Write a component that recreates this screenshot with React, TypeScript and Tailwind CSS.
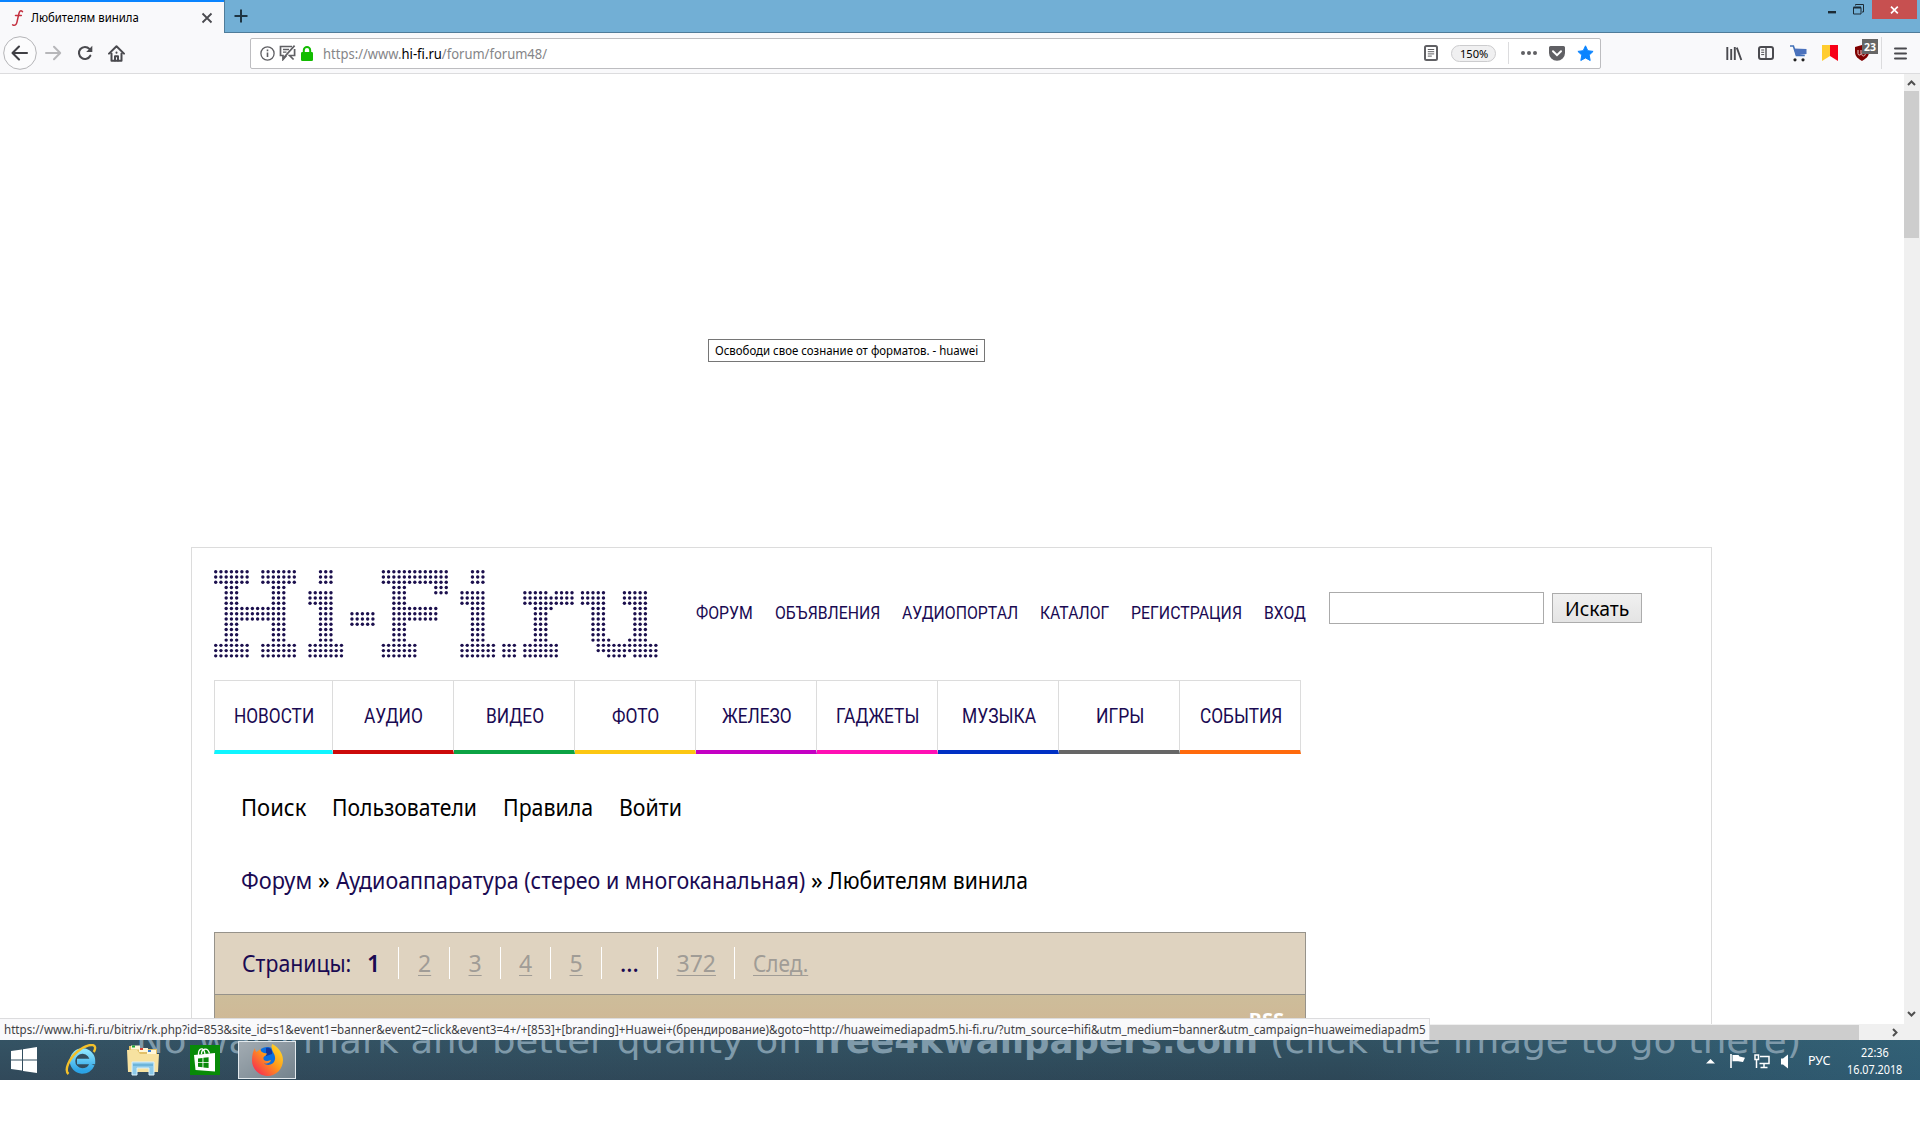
import { useLayoutEffect, useRef, useState } from "react";
import type { ReactNode } from "react";

type FitProps = {
  w: number;
  children: ReactNode;
  className?: string;
};

// Squeezes a line of text horizontally so that it fills exactly `w` pixels.
function Fit({ w, children, className = "" }: FitProps) {
  const ref = useRef<HTMLSpanElement>(null);
  const [scale, setScale] = useState(1);

  useLayoutEffect(() => {
    if (ref.current) setScale(w / ref.current.offsetWidth);
  }, [w]);

  return (
    <span className={`block shrink-0 ${className}`} style={{ width: w }}>
      <span
        ref={ref}
        className="inline-block origin-left whitespace-pre"
        style={{ transform: `scaleX(${scale})` }}
      >
        {children}
      </span>
    </span>
  );
}

// [first column, last column, first row, last row]
const LOGO_BLOCKS = [
  // H
  [0, 6, 0, 2], [9, 15, 0, 2], [2, 4, 3, 13], [11, 13, 3, 13], [5, 10, 7, 9], [0, 6, 14, 16], [9, 15, 14, 16],
  // i
  [20, 22, 0, 2], [18, 22, 4, 6], [20, 22, 7, 13], [18, 24, 14, 16],
  // -
  [26, 30, 8, 10],
  // F
  [32, 44, 0, 2], [42, 44, 3, 4], [34, 36, 3, 13], [37, 42, 7, 9], [32, 38, 14, 16],
  // i
  [49, 51, 0, 2], [47, 51, 4, 6], [49, 51, 7, 13], [47, 53, 14, 16],
  // .
  [55, 57, 14, 16],
  // r
  [59, 63, 4, 4], [65, 68, 4, 4], [59, 68, 5, 6], [61, 64, 7, 7], [61, 63, 8, 13], [59, 65, 14, 16],
  // u
  [70, 74, 4, 6], [78, 82, 4, 6], [72, 74, 7, 12], [80, 82, 7, 12], [72, 75, 13, 13], [79, 82, 13, 13],
  [73, 84, 14, 15], [75, 78, 16, 16], [80, 84, 16, 16],
];

function Logo() {
  const dots: ReactNode[] = [];
  for (const [c0, c1, r0, r1] of LOGO_BLOCKS) {
    for (let c = c0; c <= c1; c++) {
      for (let r = r0; r <= r1; r++) {
        dots.push(<circle key={`${c}-${r}`} cx={1.7 + c * 5.24} cy={1.7 + r * 5.26} r="1.7" />);
      }
    }
  }
  return (
    <svg width="446" height="90" fill="#1b0f4d" className="mt-[22px] shrink-0">
      {dots}
    </svg>
  );
}

const TOP_LINKS = [
  { label: "ФОРУМ", w: 57 },
  { label: "ОБЪЯВЛЕНИЯ", w: 105 },
  { label: "АУДИОПОРТАЛ", w: 116 },
  { label: "КАТАЛОГ", w: 69 },
  { label: "РЕГИСТРАЦИЯ", w: 111 },
  { label: "ВХОД", w: 42 },
];

const SECTIONS = [
  { label: "НОВОСТИ", w: 80, cell: "w-[119px] border-l border-b-[#0ff5ff]" },
  { label: "АУДИО", w: 59, cell: "w-[121px] border-b-[#cc0a0a]" },
  { label: "ВИДЕО", w: 58, cell: "w-[121px] border-b-[#0ca344]" },
  { label: "ФОТО", w: 47, cell: "w-[121px] border-b-[#fcc712]" },
  { label: "ЖЕЛЕЗО", w: 70, cell: "w-[121px] border-b-[#c400c4]" },
  { label: "ГАДЖЕТЫ", w: 83, cell: "w-[121px] border-b-[#ff0fb4]" },
  { label: "МУЗЫКА", w: 74, cell: "w-[121px] border-b-[#0030c4]" },
  { label: "ИГРЫ", w: 48, cell: "w-[121px] border-b-[#666]" },
  { label: "СОБЫТИЯ", w: 82, cell: "w-[121px] border-b-[#ff6a0d]" },
];

const PAGES = [
  { label: "2", w: 13 },
  { label: "3", w: 13 },
  { label: "4", w: 13 },
  { label: "5", w: 13 },
  { label: "...", w: 19 },
  { label: "372", w: 39 },
  { label: "След.", w: 55 },
];

function TabStrip() {
  return (
    <div className="flex h-[33px] items-start bg-[#72afd5]">
      <div className="flex h-[33px] w-[224px] items-center border-t-2 border-[#0a84ff] bg-[#f9f9fb] pl-[11px]">
        <svg width="14" height="18" viewBox="0 0 14 18" fill="none" stroke="#c4303f" strokeWidth="1.5" strokeLinecap="round">
          <path d="M11.5 2.6C9.5.8 8.4 2.2 7.8 5L5.9 13.4C5.4 15.8 4 17 1.6 15.8M4.5 6.4H10.3" />
        </svg>
        <Fit w={108} className="ml-[6px] text-[12px] leading-[18px] text-black">Любителям винила</Fit>
        <svg width="12" height="12" viewBox="0 0 12 12" stroke="#4a4a4f" strokeWidth="1.8" className="ml-[62px]">
          <path d="M1.5 1.5l9 9M10.5 1.5l-9 9" />
        </svg>
      </div>
      <div className="flex h-[33px] flex-1 items-start border-b border-l border-[#4f7c9a]">
        <svg width="14" height="14" stroke="#1e3442" strokeWidth="2" className="ml-[9px] mt-[9px]">
          <path d="M7 0.5v13M.5 7h13" />
        </svg>
        <svg width="9" height="3" className="ml-auto mt-[11px]">
          <rect width="8" height="2.4" fill="#1c2b35" />
        </svg>
        <svg width="11" height="11" fill="none" stroke="#1c2b35" className="ml-[16px] mt-[4px]">
          <path d="M.5 3.5h7.5v6.5H.5zM2.5 1.5V.5h8v7.5H9" />
          <path d="M.5 3.5h7.5" strokeWidth="2" />
        </svg>
        <div className="ml-[8px] mr-[3px] flex h-[19px] w-[45px] items-center justify-center bg-[#c75050]">
          <svg width="9" height="8" stroke="#fff" strokeWidth="1.7">
            <path d="M1 .6l6.8 6.8M7.8.6L1 7.4" />
          </svg>
        </div>
      </div>
    </div>
  );
}

function UrlBar() {
  return (
    <div className="ml-[125px] flex h-[31px] w-[1351px] shrink-0 items-center rounded-[2px] border border-[#bdbdc0] bg-white">
      <svg width="15" height="15" fill="none" stroke="#606064" strokeWidth="1.3" className="ml-[9px]">
        <circle cx="7.5" cy="7.5" r="6.6" />
        <path d="M7.5 6.5v4.6M7.5 3.6v1.6" strokeWidth="1.6" />
      </svg>
      <svg width="17" height="16" fill="none" stroke="#606064" strokeWidth="1.7" className="ml-[4px]">
        <path d="M13 1.5H1.5v9H4v4l3.5-4" />
        <path d="M4 4.5h6M4 7.2h3.5" strokeWidth="1.3" />
        <path d="M15.6.6L4 13.5M15.6 4v6.5h-5l4 4" />
      </svg>
      <svg width="12" height="15" className="ml-[5px]">
        <path d="M2.8 7V4.3a3.2 3.2 0 0 1 6.4 0V7" fill="none" stroke="#12bc00" strokeWidth="2" />
        <rect x="0" y="6" width="12" height="9" rx="1.3" fill="#12bc00" />
      </svg>
      <Fit w={224} className="ml-[10px] mt-px text-[14px] leading-[20px] text-[#858588]">
        https://www.<span className="text-black">hi-fi.ru</span>/forum/forum48/
      </Fit>
      <svg width="14" height="16" fill="none" stroke="#606064" className="ml-auto">
        <rect x="1" y="1" width="12" height="14" rx="1.5" strokeWidth="2" />
        <path d="M3.8 4.5h6.4M3.8 6.7h6.4M3.8 8.9h6.4M3.8 11.1h4" />
      </svg>
      <span className="ml-[13px] flex h-[17px] w-[45px] items-center justify-center rounded-full border border-[#ccccce] bg-[#f0f0f1] text-black">
        <Fit w={28} className="text-[11.5px] leading-[15px]">150%</Fit>
      </span>
      <span className="ml-[12px] h-[22px] w-px bg-[#dcdcde]" />
      <svg width="16" height="4" fill="#606064" className="ml-[12px]">
        <circle cx="2" cy="2" r="2" />
        <circle cx="8" cy="2" r="2" />
        <circle cx="14" cy="2" r="2" />
      </svg>
      <svg width="16" height="15" className="ml-[12px]">
        <path d="M1.5 0h13A1.5 1.5 0 0 1 16 1.5V7A8 7.8 0 0 1 0 7V1.5A1.5 1.5 0 0 1 1.5 0z" fill="#606064" />
        <path d="M4 5.3l4 3.9 4-3.9" fill="none" stroke="#fff" strokeWidth="2" strokeLinecap="round" />
      </svg>
      <svg width="17" height="17" viewBox="0 0 17 17" className="ml-[12px] mr-[6px]">
        <path
          d="M8.5.8l2.3 4.9 5.3.7-3.9 3.7 1 5.4-4.7-2.6-4.7 2.6 1-5.4L.9 6.4l5.3-.7z"
          fill="#0a84ff"
          stroke="#0a84ff"
          strokeLinejoin="round"
        />
      </svg>
    </div>
  );
}

function Toolbar() {
  return (
    <div className="flex h-[41px] items-center border-b border-[#dcdcde] bg-[#f9f9fb]">
      <svg width="34" height="34" fill="none" className="ml-[3px]">
        <circle cx="17" cy="17" r="16.3" fill="#fcfcfd" stroke="#b4b4b7" />
        <path d="M24 17H10M16 10.5L9.500 17l6.500 6.500" stroke="#3f3f44" strokeWidth="2.1" strokeLinecap="round" strokeLinejoin="round" />
      </svg>
      <svg width="17" height="16" fill="none" stroke="#b7b7ba" strokeWidth="2" strokeLinecap="round" strokeLinejoin="round" className="ml-[8px]">
        <path d="M1 8h14M9 1.8L15.2 8 9 14.2" />
      </svg>
      <svg width="16" height="16" fill="none" className="ml-[15px]">
        <path d="M13.3 10.7A6 6 0 1 1 12.4 3.9" stroke="#4a4a4f" strokeWidth="2.1" strokeLinecap="round" />
        <path d="M15.3.7v6.2H9.2z" fill="#4a4a4f" />
      </svg>
      <svg width="17" height="17" fill="none" stroke="#4a4a4f" strokeWidth="2" strokeLinecap="round" strokeLinejoin="round" className="ml-[15px]">
        <path d="M1 8.6L8.5 1.3 16 8.6M3.5 8.4v7.4h10V8.4" />
        <path d="M7 15.5v-4.3h3v4.3M8.5 7.4v.4" />
      </svg>
      <UrlBar />
      <svg width="17" height="15" stroke="#4a4a4f" strokeWidth="1.9" className="ml-[125px]">
        <path d="M1.3 1v13M5.2 3v11M8.8 1v13M10.8 1.6L15.3 14" />
      </svg>
      <svg width="16" height="14" fill="none" stroke="#4a4a4f" className="ml-[15px]">
        <rect x="1" y="1" width="14" height="12" rx="2" strokeWidth="2" />
        <path d="M8 1v12" strokeWidth="1.4" />
        <path d="M3.2 4h3M3.2 6.3h3M3.2 8.6h3" />
      </svg>
      <svg width="17" height="17" className="ml-[16px]">
        <path d="M0 1h3.4l3 9.5h8.4" fill="none" stroke="#4070b8" strokeWidth="1.6" />
        <path d="M4 3.5L16.5 4v5L6 10.4z" fill="#4b72bd" />
        <circle cx="5" cy="14.8" r="1.6" fill="#222" />
        <circle cx="13" cy="14.8" r="1.6" fill="#222" />
      </svg>
      <svg width="16" height="16" className="ml-[15px]">
        <path d="M0 0h8v11L0 16z" fill="#ffcc2f" />
        <path d="M8 0h8v16l-8-5z" fill="#f80017" />
      </svg>
      <div className="relative ml-[17px] h-[16px] w-[14px]">
        <svg width="14" height="16">
          <path d="M7 0l7 2v5c0 5-4 7-7 9-3-2-7-4-7-9V2z" fill="#800000" />
          <path d="M3 5v3.5a1.5 1.5 0 0 0 3 0V5M10 8.5a1.7 1.7 0 1 1-3 0 1.7 1.7 0 0 1 3 0" fill="none" stroke="#e8cfcf" />
        </svg>
        <span className="absolute -top-[6px] left-[7px] flex h-[15px] w-[16px] items-center justify-center bg-[#666] text-[10.5px] font-bold leading-[14px] text-white">
          23
        </span>
      </div>
      <span className="ml-[12px] h-[32px] w-px bg-[#dcdcde]" />
      <svg width="13" height="13" stroke="#4a4a4f" strokeWidth="2" strokeLinecap="round" className="ml-[12px]">
        <path d="M1 1.5h11M1 6.5h11M1 11.5h11" />
      </svg>
    </div>
  );
}

function SiteHeader() {
  return (
    <div className="flex h-[132px] items-start">
      <Logo />
      <nav className="ml-[36px] mt-[55px] flex gap-[22px] font-[Roboto,sans-serif] text-[18px] leading-[20px] text-[#1a0a52]">
        {TOP_LINKS.map((l) => (
          <Fit key={l.label} w={l.w}>{l.label}</Fit>
        ))}
      </nav>
      <div className="ml-[23px] mt-[44px] h-[32px] w-[215px] shrink-0 border border-[#ababab] bg-white" />
      <button className="ml-[8px] mt-[45px] flex h-[30px] w-[90px] shrink-0 items-center justify-center border border-[#acacac] bg-linear-to-b from-[#f0f0f0] to-[#e4e4e4] text-black">
        <Fit w={64} className="mt-px text-left text-[20px] leading-[28px]">Искать</Fit>
      </button>
    </div>
  );
}

function Breadcrumbs() {
  return (
    <div className="ml-[27px] mt-[43px] flex text-[23px] leading-[30px] text-[#1a0a52]">
      <Fit w={71}>Форум</Fit>
      <Fit w={12} className="ml-[6px] text-black">»</Fit>
      <Fit w={469} className="ml-[6px]">Аудиоаппаратура (стерео и многоканальная)</Fit>
      <Fit w={12} className="ml-[6px] text-black">»</Fit>
      <Fit w={200} className="ml-[5px] text-black">Любителям винила</Fit>
    </div>
  );
}

function ForumTable() {
  return (
    <div className="mt-[37px] w-[1092px] border border-[#96928a]">
      <div className="flex h-[61px] items-start bg-[#dfd3c0] text-[23px] leading-[30px] text-[#1a0a52]">
        <Fit w={109} className="ml-[27px] mt-[15px]">Страницы:</Fit>
        <Fit w={13} className="ml-[16px] mt-[15px] font-semibold">1</Fit>
        {PAGES.map((p, i) => (
          <div key={p.label} className="ml-[18px] flex">
            <span className="mt-[14px] h-[32px] w-px bg-white" />
            <Fit w={p.w} className={`mt-[15px] ${i === 0 ? "ml-[19px]" : "ml-[18.5px]"} ${i === 4 ? "font-medium" : "text-[#a09c96]"}`}>
              {i === 4 ? p.label : <span className="underline decoration-1 underline-offset-[3px]">{p.label}</span>}
            </Fit>
          </div>
        ))}
      </div>
      <div className="h-[60px] border-t border-[#96928a] bg-linear-to-b from-[#cdbd9a] via-[#cfb997] via-40% to-[#cfb997] pr-[21px] pt-[11px] text-right text-[20px] font-bold leading-[28px] text-white">
        RSS
      </div>
    </div>
  );
}

function SitePage() {
  return (
    <div className="ml-[191px] mt-[473px] h-[700px] w-[1521px] border border-[#dcdcdc] bg-white pl-[22px]">
      <SiteHeader />
      <div className="flex h-[74px] font-[Roboto,sans-serif] text-[20px] leading-[24px] text-[#1a0a52]">
        {SECTIONS.map((s) => (
          <div key={s.label} className={`flex h-full justify-center border-b-4 border-r border-t border-l-[#dcdcdc] border-r-[#dcdcdc] border-t-[#dcdcdc] pl-px pt-[23px] ${s.cell}`}>
            <Fit w={s.w}>{s.label}</Fit>
          </div>
        ))}
      </div>
      <div className="ml-[27px] mt-[38px] flex gap-[26px] text-[23px] leading-[30px] text-black">
        <Fit w={65}>Поиск</Fit>
        <Fit w={145}>Пользователи</Fit>
        <Fit w={90}>Правила</Fit>
        <Fit w={63}>Войти</Fit>
      </div>
      <Breadcrumbs />
      <ForumTable />
    </div>
  );
}

function Viewport() {
  return (
    <div className="relative flex h-[966px] flex-col overflow-hidden">
      <div className="flex h-[950px]">
        <div className="h-[950px] w-[1904px] overflow-hidden bg-white">
          <SitePage />
        </div>
        <div className="flex w-4 flex-col items-center bg-[#f0f0f0]">
          <svg width="9" height="6" fill="none" stroke="#505050" strokeWidth="2" className="mr-[2px] mt-[6px]">
            <path d="M1 5l3.5-3.5L8 5" />
          </svg>
          <div className="mr-px mt-[5px] h-[147px] w-[15px] bg-[#cdcdcd]" />
          <svg width="9" height="6" fill="none" stroke="#505050" strokeWidth="2" className="mb-[7px] mr-[2px] mt-auto">
            <path d="M1 1l3.5 3.5L8 1" />
          </svg>
        </div>
      </div>
      <div className="flex h-4 items-center bg-[#f0f0f0]">
        <div className="h-[15px] w-[1859px] bg-[#cdcdcd]" />
        <svg width="6" height="9" fill="none" stroke="#505050" strokeWidth="2" className="ml-[33px]">
          <path d="M1 1l3.5 3.5L1 8" />
        </svg>
      </div>
      <div className="absolute left-[708px] top-[265px] h-[23px] w-[277px] border border-[#767676] bg-white pl-[6px] text-[12px] leading-[21px] text-black">
        <Fit w={263}>Освободи свое сознание от форматов. - huawei</Fit>
      </div>
      <div className="absolute bottom-0 left-0 h-[22px] w-[1430px] border-r border-t border-[#dcdcde] bg-[#f9f9fb] pl-[4px] text-[12px] leading-[22px] text-[#3f3f44]">
        <Fit w={1422}>
          {"https://www.hi-fi.ru/bitrix/rk.php?id=853&site_id=s1&event1=banner&event2=click&event3=4+/+[853]+[branding]+Huawei+(брендирование)&goto=http://huaweimediapadm5.hi-fi.ru/?utm_source=hifi&utm_medium=banner&utm_campaign=huaweimediapadm5"}
        </Fit>
      </div>
    </div>
  );
}

function TaskIcons() {
  return (
    <>
      <svg width="26" height="26" fill="#fff" className="ml-[11px]">
        <path d="M0 4l11-1.6V12.4H0zM12 2.2L26 0v12.4H12zM0 13.4h11v10.2L0 22zM12 13.4h14V26l-14-2z" />
      </svg>
      <svg width="32" height="32" viewBox="0 0 32 32" fill="none" className="ml-[28px]">
        <defs>
          <linearGradient id="ie" x1="0" y1="0" x2="0" y2="1">
            <stop offset="0" stopColor="#8be4ff" />
            <stop offset="1" stopColor="#2ba3e6" />
          </linearGradient>
        </defs>
        <path d="M27 20.500C25 25 21 27 17 27A10 10 0 1 1 27.500 17.500H12" stroke="url(#ie)" strokeWidth="5.5" />
        <path d="M3.5 30C-1 26 4 15 12 8 20 1 29-1 30 3c.4 1.6-.2 3.4-1.2 5" stroke="#f3c02b" strokeWidth="2.4" />
      </svg>
      <svg width="32" height="32" viewBox="0 0 32 32" className="ml-[30px]">
        <path d="M2 2h10l2 3h16v23H2z" fill="#e2c068" />
        <rect x="4" y="1.5" width="9" height="4" fill="#fff7d8" />
        <rect x="5" y="1.5" width="3" height="2" fill="#17a835" />
        <rect x="12" y="4" width="9" height="4" fill="#fff7d8" />
        <rect x="13" y="4" width="3" height="2" fill="#d94030" />
        <rect x="20" y="6" width="9" height="4" fill="#fff7d8" />
        <rect x="21" y="6" width="3" height="2" fill="#3a7fd8" />
        <path d="M0 6h10l3 4h19l-1 18H1z" fill="#f7e2a0" />
        <path d="M5 18h22v13h-5v-7H10v7H5z" fill="#8cc9e8" stroke="#d9f0fb" />
        <path d="M6 21h20" stroke="#4f9fcb" />
      </svg>
      <svg width="30" height="30" viewBox="0 0 30 30" className="ml-[31px]">
        <rect width="30" height="30" fill="#088a08" />
        <path d="M4 10l21-2v18.5L5.5 25z" fill="#fff" />
        <path d="M8.5 10.5C8 4 12 2 14 5.5 15 8 15 9 15 10M11.5 9c0-5 6-7.5 8-.5" fill="none" stroke="#fff" strokeWidth="1.3" />
        <path d="M8 13.5l4.5-.6v4.300H8zM13.400 12.800l5.200-.6v5H13.400zM8 18h4.500v4.300L8 21.800zM13.400 18h5.200v5l-5.200-.6z" fill="#088a08" />
      </svg>
      <div className="ml-[18px] flex h-[38px] w-[58px] items-center justify-center border border-[#e3eaee] bg-linear-to-br from-[#a3acb3] to-[#74838d]">
        <svg width="31" height="32" viewBox="0 0 31 32">
          <defs>
            <linearGradient id="ff" x1="1" y1="0" x2="0" y2="1">
              <stop offset="0" stopColor="#ffe82b" />
              <stop offset=".45" stopColor="#ff9a1a" />
              <stop offset="1" stopColor="#f5135f" />
            </linearGradient>
          </defs>
          <circle cx="15.5" cy="14" r="11" fill="#0a6fe0" />
          <path d="M14 4c4-1 7 2 6 6l-6 2z" fill="#1237a0" />
          <path
            d="M3 4c0 2 .6 3 1.5 4l4-3c0 2 1 3 3.5 4l3 .6c-.5 2-3 2.4-3.5 4-.4 2 1 3.5 3 3.500 2 0 3-1.200 4.500-.8-1 2.700-4 4-7 3 3 3 10 2 11-4 .8-5-3.500-8-3.500-12L20 0c4 1.500 11 8 11 16 0 9-7 16-15.500 16S0 25 0 16.500C0 11 1 7 3 4z"
            fill="url(#ff)"
          />
        </svg>
      </div>
    </>
  );
}

function Tray() {
  return (
    <div className="ml-auto flex h-full items-center text-[12px] text-white">
      <svg width="9" height="5" fill="#fff" className="mt-[3px]">
        <path d="M4.5 0L9 4.5H0z" />
      </svg>
      <svg width="16" height="16" className="ml-[15px] mt-[2px]">
        <path d="M1 1v14" stroke="#fff" strokeWidth="1.6" />
        <path d="M2.5 2h6l1 1.5 5.5 1.2-2 4.3-5-.8H2.5z" fill="#fff" />
      </svg>
      <svg width="16" height="15" fill="none" stroke="#fff" strokeWidth="1.5" className="ml-[8px] mt-[2px]">
        <path d="M6 2.500h9v7H5.500M10 9.500V13M6.500 13.500h7M2.500 6v8" />
        <rect x="1" y="1" width="3.5" height="4.5" />
      </svg>
      <svg width="8" height="15" className="ml-[11px] mt-[2px]">
        <path d="M0 4.5h2L7 .5v14l-5-4H0z" fill="#fff" />
      </svg>
      <Fit w={23} className="ml-[19px] mt-[2px] leading-[18px]">РУС</Fit>
      <div className="ml-[16px] mr-[18px] mt-[2px] flex w-[55px] flex-col items-center leading-[17px]">
        <Fit w={28}>22:36</Fit>
        <Fit w={55}>16.07.2018</Fit>
      </div>
    </div>
  );
}

function Taskbar() {
  return (
    <div className="relative h-10 overflow-hidden bg-linear-to-r from-[#31495a] via-[#2d4757] via-70% to-[#2f5c73]">
      <div className="absolute inset-0 bg-linear-to-b from-[#3d7080]/25 to-transparent" />
      <div className="absolute left-[136px] top-[-19px] flex font-['DejaVu_Sans',sans-serif] text-[36px] leading-[40px] text-[#7f9aaa]">
        <Fit w={666}>No watermark and better quality on</Fit>
        <Fit w={445} className="ml-[11px] font-bold">free4kwallpapers.com</Fit>
        <Fit w={531} className="ml-[12px]">(click the image to go there)</Fit>
      </div>
      <div className="relative flex h-full items-center">
        <TaskIcons />
        <Tray />
      </div>
    </div>
  );
}

export default function App() {
  return (
    <div className="flex h-[1125px] w-[1920px] flex-col overflow-hidden bg-white font-['Noto_Sans',sans-serif]">
      <TabStrip />
      <Toolbar />
      <Viewport />
      <Taskbar />
    </div>
  );
}
